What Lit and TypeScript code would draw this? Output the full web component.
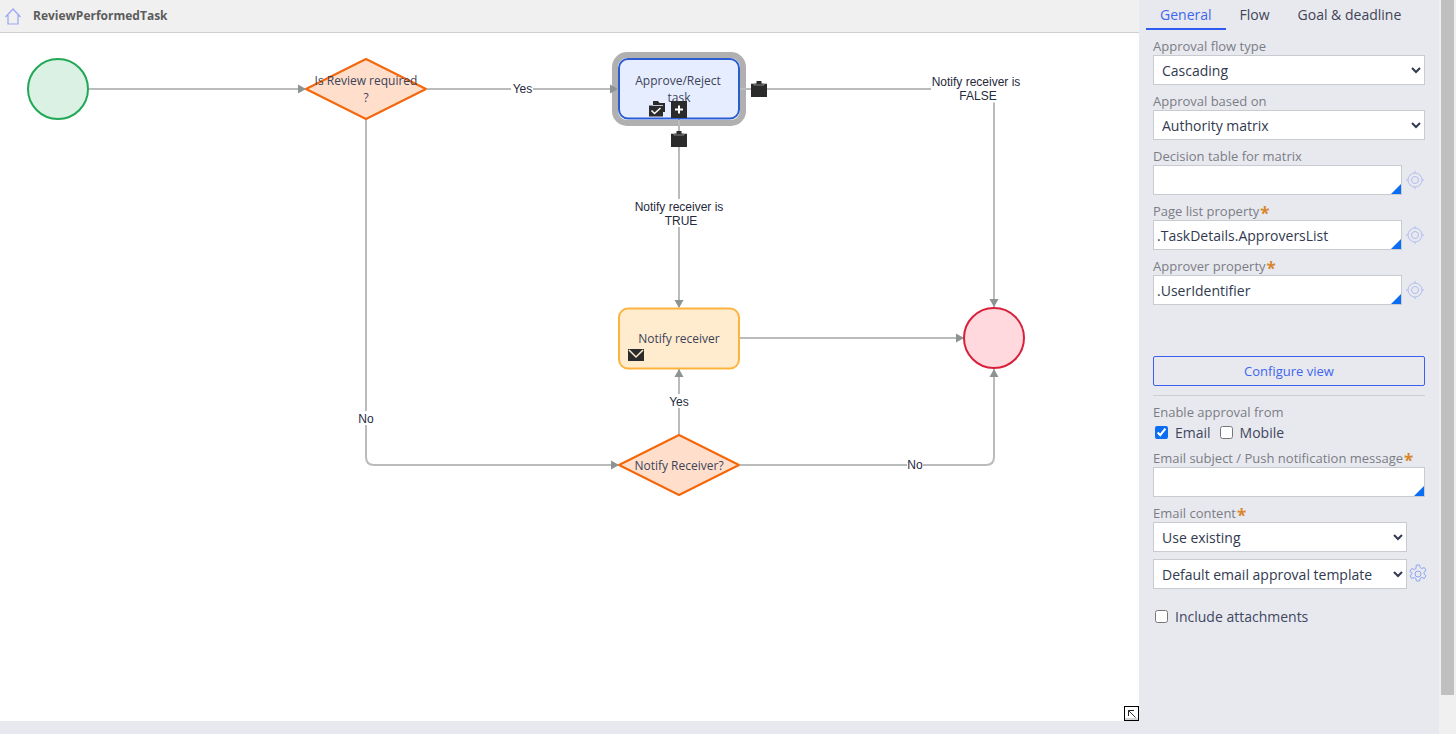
import { LitElement, html, css, svg } from "lit";
import { customElement } from "lit/decorators.js";

const clip = (x: number, y: number) => svg`<g transform="translate(${x} ${y})">
  <path fill="#2b2b2b" d="M5.500 0h5v2.500h5.500v13.500h-16v-13.500h5.500z"/>
  <path d="M0 2.500h3v1.500h10v-1.500h3" fill="none" stroke="#fff" stroke-width="0.600" opacity="0.700"/></g>`;

const target = html`<svg class="ic" width="18" height="18" viewBox="0 0 18 18" fill="none" stroke="#b0bef0" stroke-width="1">
  <circle cx="9" cy="9" r="7"/><circle cx="9" cy="9" r="3.500"/><path d="M9 0v2M9 16v2M0 9h2M16 9h2"/></svg>`;

const gear = html`<svg class="ic" width="20" height="20" viewBox="0 0 20 20" fill="none" stroke="#8ea6f2" stroke-width="1">
  <path d="M8.400 1h3.200l.5 2.600 1.700.9 2.500-1 1.700 2.900-2 1.700v1.800l2 1.700-1.700 2.900-2.500-1-1.700.9-.5 2.600H8.400l-.5-2.600-1.700-.9-2.500 1-1.700-2.900 2-1.700V9.100L2 7.400l1.700-2.900 2.500 1 1.700-.9z" stroke-linejoin="round"/><circle cx="10" cy="10" r="3"/></svg>`;

@customElement("app-root")
export class AppRoot extends LitElement {
  static styles = css`
    :host { display: block; width: 1456px; height: 734px; overflow: hidden; font-family: "Open Sans", sans-serif; background: #e8e9ef; }
    * { box-sizing: border-box; }
    .page { display: grid; grid-template-columns: 1139px 300px 17px; height: 734px; }
    .left { display: flex; flex-direction: column; height: 734px; background: #e8e9ef; }
    .head { height: 33px; background: #f0f0f0; border-bottom: 1px solid #cfcfcf; display: flex; align-items: center; padding: 0 0 0 5px; gap: 12px; flex: none; }
    .head b { font-size: 12px; font-weight: 700; color: #5c5c5c; margin-bottom: 2px; }
    .canvas { position: relative; height: 688px; background: #fff; flex: none; }
    .canvas svg.flow { display: block; position: absolute; left: 0; top: -33px; }
    .resize { position: absolute; right: 0; bottom: 0; width: 15px; height: 15px; border: 1px solid #000; background: #fff; box-shadow: inset 0 -2px 0 #d6d6d6; }
    .resize svg { display: block; }
    text { font-family: "Open Sans", sans-serif; font-size: 12px; fill: #3c4358; text-anchor: middle; }
    text.e { font-family: "Liberation Sans", sans-serif; fill: #1f2a3c; }
    .panel { background: #e8e9ef; padding: 0 14px; position: relative; }
    .tabs { display: flex; height: 30px; margin: 0 -7px; font-size: 14px; color: #3f4455; }
    .tab { padding: 5px 14px 0; height: 30px; }
    .tab.on { color: #3d67ee; border-bottom: 2px solid #2f5cf0; }
    .f { width: 272px; }
    .lbl { display: block; height: 25px; padding-top: 7px; line-height: 18px; font-size: 13px; color: #7b7d85; white-space: nowrap; }
    .star { color: #d9862c; font-size: 17px; font-weight: 700; line-height: 10px; margin-left: 1px; vertical-align: -4px; }
    select { display: block; height: 30px; width: 272px; font: 14px "Open Sans", sans-serif; color: #323a50; background: #fff; border: 1px solid #c9cbd0; border-radius: 0; padding: 0 4px; outline: none; flex: none; }
    select.short { width: 254px; }
    .row { display: flex; align-items: center; gap: 4px; }
    .inp { position: relative; height: 30px; width: 249px; background: #fff; border: 1px solid #c9cbd0; font-size: 14px; line-height: 29px; padding-left: 3px; color: #323a50; flex: none; }
    .inp.wide { width: 272px; }
    .inp::after { content: ""; position: absolute; right: 0; bottom: 0; border-style: solid; border-width: 0 0 10px 10px; border-color: transparent transparent #0b6ef2 transparent; }
    .ic { display: block; flex: none; }
    .btn { display: block; margin-top: 51px; width: 272px; height: 30px; border: 1px solid #3d5ff0; border-radius: 2px; background: transparent; color: #3d67ee; font: 13px "Open Sans", sans-serif; padding: 0; }
    .hr { height: 1px; background: #cdced2; margin-top: 9px; width: 272px; }
    .checks { display: flex; align-items: center; height: 20px; gap: 9px; padding-left: 2px; margin-top: 1px; font-size: 14px; color: #3f4660; }
    .checks label { display: flex; align-items: center; gap: 7px; }
    input[type=checkbox] { margin: 0; width: 13px; height: 13px; accent-color: #0b6ef2; flex: none; }
    .sel2 { margin-top: 7px; gap: 1px; }
    .incl { margin-top: 17px; }
    .sb { background: #f0f0f0; padding: 0 2px; }
    .thumb { height: 695px; background: #c0c0c0; }
  `;

  render() {
    return html`<div class="page">
      <div class="left">
        <div class="head">
          <svg width="16" height="17" viewBox="0 0 16 17" fill="none" stroke="#9aa6f2" stroke-width="1.200"><path d="M0.500 9 8 1 15.500 9M3 7v9h10V7"/></svg>
          <b>ReviewPerformedTask</b>
        </div>
        <div class="canvas">
          ${this.flow()}
          <div class="resize"><svg width="13" height="13" viewBox="0 0 13 13" fill="none" stroke="#222"><path d="M3.500 9V3.500H9"/><path d="M3.500 3.500l7 7" stroke-width="0.900"/></svg></div>
        </div>
      </div>
      <div class="panel">
        <div class="tabs"><div class="tab on">General</div><div class="tab">Flow</div><div class="tab">Goal &amp; deadline</div></div>
        <div class="f"><span class="lbl">Approval flow type</span><select><option>Cascading</option></select></div>
        <div class="f"><span class="lbl">Approval based on</span><select><option>Authority matrix</option></select></div>
        <div class="f"><span class="lbl">Decision table for matrix</span><div class="row"><div class="inp"></div>${target}</div></div>
        <div class="f"><span class="lbl">Page list property<span class="star">*</span></span><div class="row"><div class="inp">.TaskDetails.ApproversList</div>${target}</div></div>
        <div class="f"><span class="lbl">Approver property<span class="star">*</span></span><div class="row"><div class="inp">.UserIdentifier</div>${target}</div></div>
        <button class="btn">Configure view</button>
        <div class="hr"></div>
        <span class="lbl">Enable approval from</span>
        <div class="checks"><label><input type="checkbox" checked />Email</label><label><input type="checkbox" />Mobile</label></div>
        <div class="f"><span class="lbl">Email subject / Push notification message<span class="star">*</span></span><div class="inp wide"></div></div>
        <div class="f"><span class="lbl">Email content<span class="star">*</span></span><select class="short"><option>Use existing</option></select></div>
        <div class="row sel2"><select class="short"><option>Default email approval template</option></select>${gear}</div>
        <div class="checks incl"><label><input type="checkbox" />Include attachments</label></div>
      </div>
      <div class="sb"><div class="thumb"></div></div>
    </div>`;
  }

  flow() {
    const arrow = (x: number, y: number, d: string) => {
      const p: Record<string, string> = {
        r: `${x - 8},${y - 4.5} ${x},${y} ${x - 8},${y + 4.5}`,
        d: `${x - 4.5},${y - 8} ${x},${y} ${x + 4.5},${y - 8}`,
        u: `${x - 4.5},${y + 8} ${x},${y} ${x + 4.5},${y + 8}`,
      };
      return svg`<polygon points=${p[d]} fill="#8b9493"/>`;
    };
    const label = (x: number, y: number, w: number, h: number) => svg`<rect x=${x - w / 2} y=${y - h / 2} width=${w} height=${h} fill="#fff"/>`;
    return html`<svg class="flow" width="1139" height="721" viewBox="0 0 1139 721">
      <rect x="615" y="55" width="128" height="68" rx="12" fill="none" stroke="#b0b0b0" stroke-width="6"/>
      <g fill="none" stroke="#b9bcbb" stroke-width="2">
        <path d="M89 89H305"/>
        <path d="M427 89H618"/>
        <path d="M740 89H988Q994 89 994 95V307"/>
        <path d="M679 119V307"/>
        <path d="M740 338H963"/>
        <path d="M679 435V369"/>
        <path d="M366 119V457Q366 465 374 465H618"/>
        <path d="M740 465H986Q994 465 994 457V369"/>
      </g>
      ${arrow(306, 89, "r")}${arrow(618, 89, "r")}${arrow(679, 308, "d")}${arrow(994, 307, "d")}
      ${arrow(964, 338, "r")}${arrow(679, 369, "u")}${arrow(619, 465, "r")}${arrow(994, 369, "u")}

      <circle cx="58" cy="89" r="30" fill="#daf1e3" stroke="#1fa855" stroke-width="2"/>
      <polygon points="306,89 366,59 426,89 366,119" fill="#ffdfcc" stroke="#f5660a" stroke-width="2" stroke-linejoin="round"/>
      <text x="366" y="85">Is Review required</text><text x="366" y="101.500">?</text>

      <rect x="619" y="59" width="120" height="59.500" rx="9" fill="#e6edff" stroke="#2a5bd0" stroke-width="2"/>
      <text x="678" y="85">Approve/Reject</text><text x="679" y="102">task</text>

      <rect x="619" y="308.500" width="120" height="60" rx="9" fill="#ffeccf" stroke="#ffb33f" stroke-width="2"/>
      <text x="679" y="343">Notify receiver</text>
      <rect x="628" y="349" width="16" height="12" fill="#2b2b2b"/>
      <path d="M629 350l7 7 7-7" fill="none" stroke="#ffeccf" stroke-width="1.500"/>

      <circle cx="994" cy="338" r="30" fill="#ffd9de" stroke="#d8203a" stroke-width="2"/>
      <polygon points="619,465 679,435 739,465 679,495" fill="#ffdfcc" stroke="#f5660a" stroke-width="2" stroke-linejoin="round"/>
      <text x="679" y="470">Notify Receiver?</text>

      ${label(522, 88.5, 22, 14)}<text class="e" x="522.500" y="93">Yes</text>
      ${label(366, 418, 16, 14)}<text class="e" x="366" y="423">No</text>
      ${label(679, 401, 22, 14)}<text class="e" x="679" y="406">Yes</text>
      ${label(915, 465, 16, 14)}<text class="e" x="915" y="469">No</text>
      ${label(679, 213, 90, 28)}<text class="e" x="679" y="211">Notify receiver is</text><text class="e" x="681" y="225">TRUE</text>
      ${label(976, 88.5, 90, 28)}<text class="e" x="976" y="86">Notify receiver is</text><text class="e" x="978" y="100">FALSE</text>

      ${clip(751, 81)}${clip(671, 131)}
      <path d="M653 101h5l1.500 2H665v9h-12z" fill="#2b2b2b"/>
      <path d="M649 105.500h14v11h-14z" fill="#2b2b2b"/>
      <path d="M652.500 105.500h10.500" fill="none" stroke="#e6edff" stroke-width="0.800"/>
      <path d="M651.500 110.500l3 3 6-5.500" fill="none" stroke="#fff" stroke-width="1.500"/>
      <rect x="671" y="101" width="16" height="17" fill="#2b2b2b"/><path d="M679 105.500v8M675 109.500h8" stroke="#fff" stroke-width="2"/>
    </svg>`;
  }
}
